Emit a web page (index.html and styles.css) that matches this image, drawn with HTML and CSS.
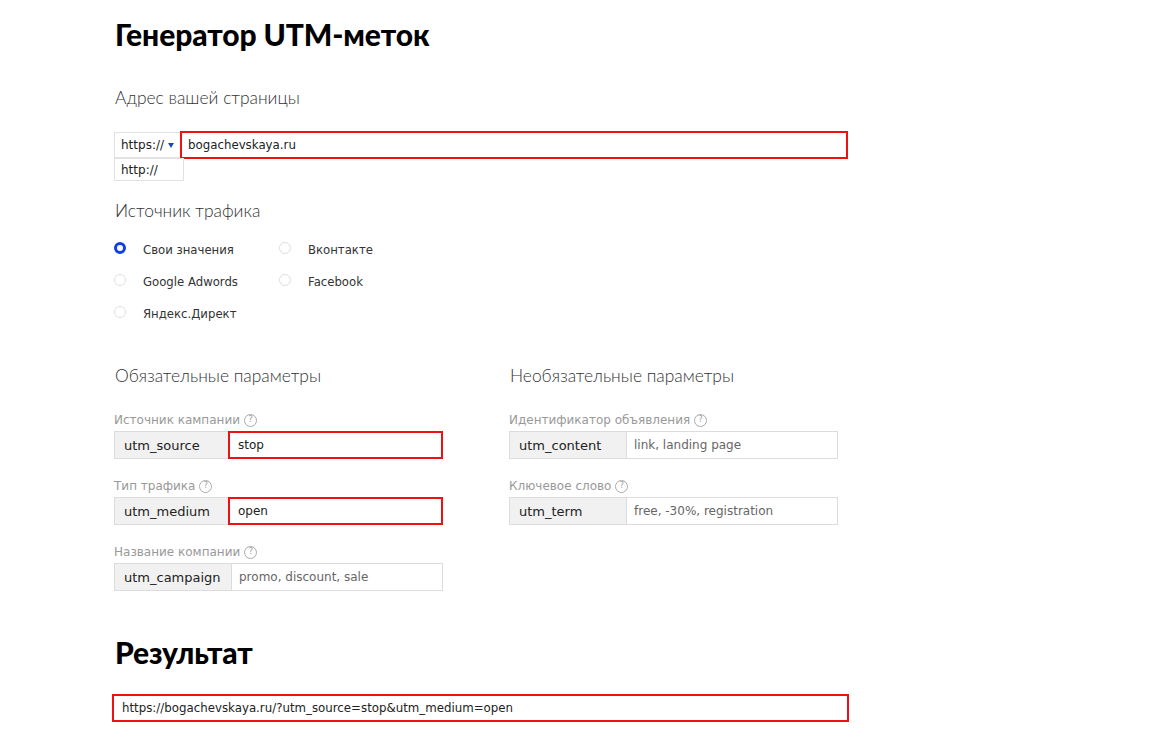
FILE: index.html
```html
<!DOCTYPE html>
<html lang="ru">
<head>
    <meta charset="UTF-8">
    <meta name="viewport" content="width=device-width, initial-scale=1.0">
    <title>Генератор UTM-меток</title>
    <link rel="stylesheet" href="styles.css">
</head>
<body>

    <div class="page">
        <h1>Генератор UTM-меток</h1>

        <h3 class="section-title first">Адрес вашей страницы</h3>
        <div class="url-row">
            <div class="protocol">
                <span>https://</span>
                <span class="caret"></span>
                <div class="protocol-menu">http://</div>
            </div>
            <div class="url-input">bogachevskaya.ru</div>
        </div>

        <h3 class="section-title">Источник трафика</h3>
        <div class="sources">
            <label class="radio"><span class="dot checked"></span>Свои значения</label>
            <label class="radio"><span class="dot"></span>Вконтакте</label>
            <label class="radio"><span class="dot"></span>Google Adwords</label>
            <label class="radio"><span class="dot"></span>Facebook</label>
            <label class="radio"><span class="dot"></span>Яндекс.Директ</label>
        </div>

        <div class="params">
            <div class="params-col">
                <h3 class="section-title">Обязательные параметры</h3>

                <div class="field-label">Источник кампании <span class="help">?</span></div>
                <div class="group">
                    <div class="addon">utm_source</div>
                    <div class="value active">stop</div>
                </div>

                <div class="field-label">Тип трафика <span class="help">?</span></div>
                <div class="group">
                    <div class="addon">utm_medium</div>
                    <div class="value active">open</div>
                </div>

                <div class="field-label">Название компании <span class="help">?</span></div>
                <div class="group">
                    <div class="addon wide">utm_campaign</div>
                    <div class="value placeholder">promo, discount, sale</div>
                </div>
            </div>

            <div class="params-col">
                <h3 class="section-title">Необязательные параметры</h3>

                <div class="field-label">Идентификатор объявления <span class="help">?</span></div>
                <div class="group">
                    <div class="addon wide">utm_content</div>
                    <div class="value placeholder">link, landing page</div>
                </div>

                <div class="field-label">Ключевое слово <span class="help">?</span></div>
                <div class="group">
                    <div class="addon wide">utm_term</div>
                    <div class="value placeholder">free, -30%, registration</div>
                </div>
            </div>
        </div>

        <h2>Результат</h2>
        <div class="result">https://bogachevskaya.ru/?utm_source=stop&amp;utm_medium=open</div>
    </div>

</body>
</html>
```

FILE: styles.css
```css
body {
    margin: 0;
    padding: 0;
    background-color: #fff;
    color: #222;
    font-family: 'DejaVu Sans', Verdana, sans-serif;
}

.page {
    padding: 16px 0 40px 114px;
    width: 740px;
}

h1,
h2 {
    margin: 0;
    font-family: 'Lato', 'Noto Sans', sans-serif;
    font-weight: 900;
    font-size: 30px;
    line-height: 36px;
    color: #000;
    padding-left: 1px;
    letter-spacing: -0.1px;
}

h2 {
    margin-top: 43px;
}

.section-title {
    margin: 40px 0 0;
    padding-left: 1px;
    font-family: 'Lato', 'Open Sans', sans-serif;
    font-weight: 300;
    font-size: 17.4px;
    line-height: 24px;
    color: #333;
}

.section-title.first {
    margin-top: 34px;
}

/* адрес страницы */
.url-row {
    display: flex;
    width: 734px;
    margin-top: 21px;
    height: 28px;
}

.protocol {
    position: relative;
    display: flex;
    align-items: center;
    gap: 4px;
    width: 66px;
    height: 26px;
    margin-top: 1px;
    padding-left: 6px;
    box-sizing: border-box;
    border: 1px solid #e2e2e2;
    border-right: none;
    font-size: 12px;
}

.caret {
    width: 0;
    height: 0;
    border-left: 3px solid transparent;
    border-right: 3px solid transparent;
    border-top: 5px solid #1a45c8;
}

.protocol-menu {
    position: absolute;
    top: 25px;
    left: -1px;
    width: 70px;
    height: 23px;
    box-sizing: border-box;
    padding: 4px 0 0 6px;
    background: #fff;
    border: 1px solid #e2e2e2;
    font-size: 12px;
}

.url-input {
    flex: 1;
    display: flex;
    align-items: center;
    padding-left: 6px;
    border: 2px solid #f01010;
    font-size: 11.8px;
}

/* источник трафика */
.sources {
    display: grid;
    grid-template-columns: 165px 200px;
    margin-top: 11px;
}

.radio {
    display: flex;
    align-items: center;
    height: 32px;
    font-size: 11.7px;
    color: #333;
}

.dot {
    width: 10px;
    height: 10px;
    margin-right: 17px;
    border: 1px solid #e0e0e0;
    border-radius: 50%;
    position: relative;
    top: -2px;
}

.dot.checked {
    width: 6px;
    height: 6px;
    border: 3px solid #1140e0;
    background: #fff;
}

/* параметры */
.params {
    display: flex;
    gap: 66px;
    margin-top: -6px;
}

.params-col {
    width: 329px;
}

.field-label {
    display: flex;
    align-items: center;
    gap: 4px;
    margin-top: 23px;
    margin-bottom: 2px;
    line-height: 18px;
    font-size: 12px;
    color: #999;
}

.group + .field-label {
    margin-top: 18px;
}

.help {
    display: inline-flex;
    align-items: center;
    justify-content: center;
    width: 11px;
    height: 11px;
    border: 1px solid #aaa;
    border-radius: 50%;
    font-size: 8px;
    color: #999;
}

.group {
    display: flex;
    height: 28px;
    box-sizing: border-box;
    border: 1px solid #dcdcdc;
}

.addon {
    display: flex;
    align-items: center;
    width: 114px;
    padding-left: 9px;
    box-sizing: border-box;
    background: #f1f1f1;
    border-right: 1px solid #dcdcdc;
    font-size: 13px;
    color: #222;
}

.addon.wide {
    width: 117px;
}

.value {
    flex: 1;
    display: flex;
    align-items: center;
    padding-left: 7px;
    font-size: 12px;
}

.value.active {
    margin: -1px;
    padding-left: 8px;
    border: 2px solid #f01010;
}

.value.placeholder {
    color: #666;
}

/* результат */
.result {
    display: flex;
    align-items: center;
    width: 737px;
    height: 28px;
    margin: 24px 0 0 -2px;
    padding-left: 8px;
    box-sizing: border-box;
    border: 2px solid #f01010;
    font-size: 11.8px;
}
```
